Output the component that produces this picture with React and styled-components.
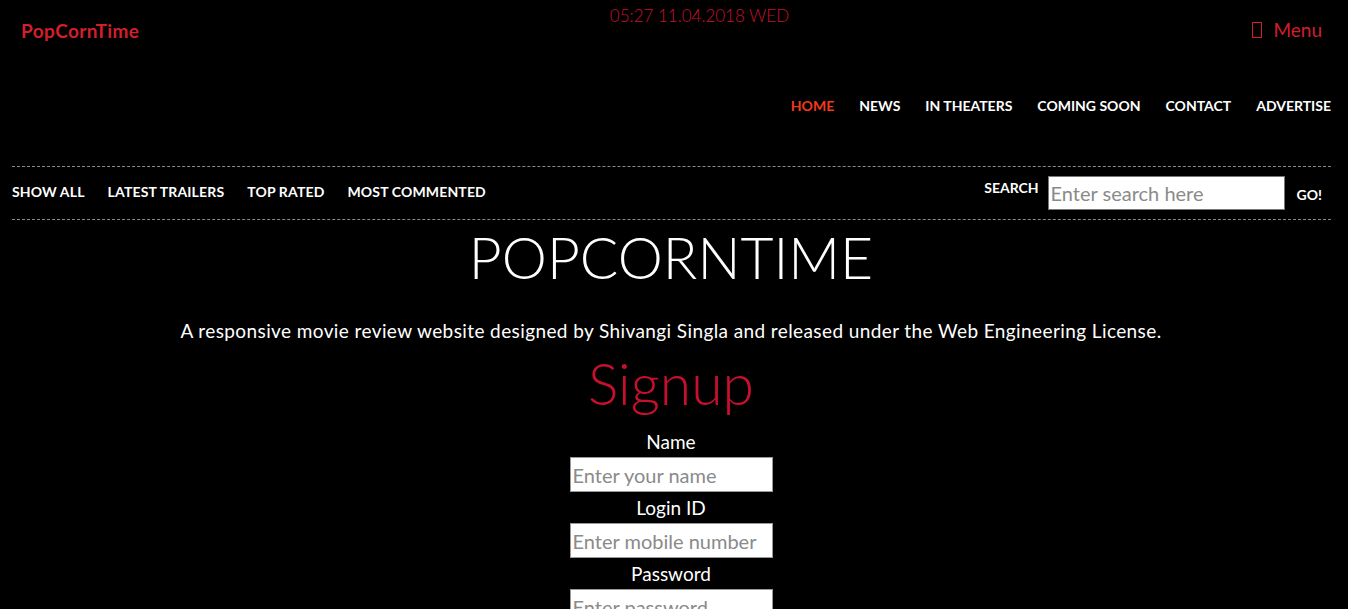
import React from "react";
import styled, { createGlobalStyle } from "styled-components";

const Global = createGlobalStyle`
  html, body { margin: 0; padding: 0; background: #000; }
  body { font-family: Lato, "Open Sans", sans-serif; color: #fff; }
  input::placeholder { color: #8a8a8a; opacity: 1; }
`;

const Page = styled.div`
  min-height: 609px;
  background: #000;
`;

const Header = styled.header`
  display: grid;
  grid-template-columns: 1fr auto 1fr;
  align-items: start;
  padding: 0 26px 0 21px;
  height: 60px;
`;

const Logo = styled.a`
  justify-self: start;
  margin-top: 19px;
  color: #d11f2b;
  font-size: 19px;
  font-weight: 700;
  letter-spacing: 0.4px;
  text-decoration: none;
`;

const Clock = styled.div`
  margin-top: 5px;
  margin-left: 56px;
  color: #c8102e;
  font-size: 17px;
  font-weight: 300;
`;

const MenuBtn = styled.div`
  justify-self: end;
  margin-top: 18px;
  display: flex;
  align-items: center;
  gap: 11px;
  color: #d11f2b;
  font-size: 19px;
`;

const Tofu = styled.span`
  display: inline-block;
  width: 8px;
  height: 14px;
  border: 1px solid #d11f2b;
`;

const MainNav = styled.nav`
  display: flex;
  justify-content: flex-end;
  gap: 25px;
  padding: 37px 17px 0 0;
  height: 69px;
  box-sizing: border-box;
`;

const NavLink = styled.a`
  color: ${(p) => (p.$active ? "#f23a1c" : "#fff")};
  font-size: 14px;
  font-weight: 700;
  letter-spacing: ${(p) => (p.$wide ? "0.15px" : "0")};
  text-transform: uppercase;
  text-decoration: none;
`;

const SubBar = styled.div`
  margin: 37px 17px 0 12px;
  border-top: 1px dashed #8a8a8a;
  border-bottom: 1px dashed #8a8a8a;
  height: 52px;
  box-sizing: content-box;
  display: flex;
  justify-content: space-between;
  align-items: center;
`;

const SubNav = styled.div`
  display: flex;
  gap: 23px;
  margin-top: -4px;
`;

const Search = styled.form`
  display: flex;
  align-items: center;
  margin-right: 9px;
`;

const SearchLabel = styled.span`
  font-size: 14px;
  font-weight: 700;
  text-transform: uppercase;
  margin-right: 9px;
  margin-top: -11px;
`;

const SearchInput = styled.input`
  width: 237px;
  height: 34px;
  box-sizing: border-box;
  border: 1px solid #777;
  padding: 0 2px;
  font-family: inherit;
  font-size: 20px;
  margin-right: 12px;
`;

const Go = styled.span`
  font-size: 14px;
  font-weight: 700;
  margin-top: 2px;
`;

const Main = styled.main`
  text-align: center;
  padding-right: 6px;
`;

const Title = styled.h1`
  margin: 4px 0 0;
  font-size: 57px;
  font-weight: 300;
  line-height: 66px;
`;

const Desc = styled.p`
  margin: 30px 0 0;
  font-size: 19px;
  letter-spacing: 0.4px;
  line-height: 22px;
`;

const Signup = styled.h2`
  margin: 10px 0 0;
  color: #c8102e;
  font-size: 57px;
  font-weight: 300;
  line-height: 62px;
`;

const Form = styled.form`
  display: flex;
  flex-direction: column;
  align-items: center;
  margin-top: 12px;
`;

const Label = styled.label`
  font-size: 19px;
  line-height: 31px;
`;

const Field = styled.input`
  width: 203px;
  height: 35px;
  box-sizing: border-box;
  border: 1px solid #999;
  padding: 0 2px;
  font-family: inherit;
  font-size: 20px;
`;

export default function App() {
  const main = ["Home", "News", "In Theaters", "Coming Soon", "Contact", "Advertise"];
  const sub = ["Show All", "Latest Trailers", "Top Rated", "Most Commented"];
  return (
    <Page>
      <Global />
      <Header>
        <Logo href="#">PopCornTime</Logo>
        <Clock>05:27 11.04.2018 WED</Clock>
        <MenuBtn>
          <Tofu />
          <span>Menu</span>
        </MenuBtn>
      </Header>
      <MainNav>
        {main.map((m, i) => (
          <NavLink key={m} href="#" $active={i === 0}>
            {m}
          </NavLink>
        ))}
      </MainNav>
      <SubBar>
        <SubNav>
          {sub.map((s) => (
            <NavLink key={s} href="#" $wide>
              {s}
            </NavLink>
          ))}
        </SubNav>
        <Search>
          <SearchLabel>Search</SearchLabel>
          <SearchInput placeholder="Enter search here" />
          <Go>GO!</Go>
        </Search>
      </SubBar>
      <Main>
        <Title>POPCORNTIME</Title>
        <Desc>
          A responsive movie review website designed by Shivangi Singla and released under the Web
          Engineering License.
        </Desc>
        <Signup>Signup</Signup>
        <Form>
          <Label>Name</Label>
          <Field placeholder="Enter your name" />
          <Label>Login ID</Label>
          <Field placeholder="Enter mobile number" />
          <Label>Password</Label>
          <Field type="password" placeholder="Enter password" />
        </Form>
      </Main>
    </Page>
  );
}
